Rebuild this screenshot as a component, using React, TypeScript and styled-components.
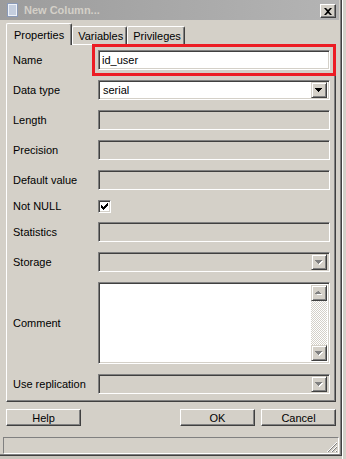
import styled, { createGlobalStyle, css } from 'styled-components'

const GlobalStyle = createGlobalStyle`
  html, body {
    margin: 0;
    padding: 0;
    background: #c9c5bd;
  }
  body {
    font-family: "Liberation Sans", Arial, sans-serif;
    font-size: 11px;
    color: #000;
  }
`

const sunken = css`
  border: 1px solid;
  border-color: #808080 #fff #fff #808080;
  box-shadow: inset 1px 1px #404040, inset -1px -1px #d4d0c8;
`

const raised = css`
  border: 1px solid;
  border-color: #d4d0c8 #404040 #404040 #d4d0c8;
  box-shadow: inset 1px 1px #fff, inset -1px -1px #808080;
`

const Page = styled.div`
  display: flex;
  width: 346px;
  height: 459px;
  overflow: hidden;
`

const Window = styled.div`
  width: 342px;
  height: 456px;
  display: flex;
  flex-direction: column;
  background: #d4d0c8;
  border-right: 1px solid #404040;
  border-bottom: 1px solid #404040;
  box-shadow: inset -1px -1px #808080;
  box-sizing: border-box;
`

const Backdrop = styled.div`
  flex: 1;
  background: #d4d0c8;
  border-left: 1px solid #fff;
`

const TitleBar = styled.div`
  height: 20px;
  margin-right: 2px;
  display: flex;
  align-items: center;
  gap: 6px;
  padding: 0 3px 0 7px;
  background: linear-gradient(90deg, #9c9c9c, #b4b4b4);
`

const Title = styled.span`
  flex: 1;
  font-weight: bold;
  font-size: 11px;
  color: #d4d0c8;
`

const CloseButton = styled.div`
  width: 16px;
  height: 14px;
  box-sizing: border-box;
  ${raised};
  border-color: #fff #404040 #404040 #fff;
  box-shadow: inset -1px -1px #808080;
  background: #d4d0c8;
  display: flex;
  align-items: center;
  justify-content: center;
  margin-top: 2px;
`

const Body = styled.div`
  flex: 1;
  display: flex;
  flex-direction: column;
  padding: 3px 2px 0 3px;
`

const TabStrip = styled.div`
  display: flex;
  align-items: flex-end;
  height: 21px;
  margin: 0 3px;
  position: relative;
  z-index: 1;
`

const Tab = styled.div<{ $active?: boolean }>`
  box-sizing: border-box;
  height: ${({ $active }) => ($active ? 22 : 18)}px;
  margin-bottom: ${({ $active }) => ($active ? -1 : 0)}px;
  padding: 0 ${({ $active }) => ($active ? 7 : 3)}px 0 ${({ $active }) => ($active ? 7 : 5)}px;
  display: flex;
  align-items: center;
  background: #d4d0c8;
  border: 1px solid #fff;
  border-bottom: none;
  border-right: 1px solid #404040;
  border-radius: 2px 2px 0 0;
  box-shadow: inset -1px 0 #808080;
`

const Panel = styled.div`
  margin: 0 3px;
  height: 358px;
  box-sizing: border-box;
  border: 1px solid;
  border-color: #fff #404040 #404040 #fff;
  box-shadow: inset -1px -1px #808080;
  padding: 5px 5px 6px 6px;
  display: grid;
  grid-template-columns: 85px 1fr;
  grid-template-rows: repeat(5, 20px) 12px 20px 20px 82px 20px;
  row-gap: 10px;
  align-items: center;
`

const Label = styled.div`
  white-space: nowrap;
`

const Field = styled.div<{ $disabled?: boolean; $height?: number }>`
  ${sunken};
  box-sizing: border-box;
  height: ${({ $height }) => $height ?? 20}px;
  background: ${({ $disabled }) => ($disabled ? '#d4d0c8' : '#fff')};
  display: flex;
  align-items: center;
  padding: 0 2px 0 3px;
`

const Highlight = styled.div`
  outline: 3px solid #ec1c24;
  outline-offset: 3px;
  height: 20px;
`

const FieldText = styled.span`
  flex: 1;
  padding-left: 1px;
`

const DropButton = styled.div`
  ${raised};
  box-sizing: border-box;
  width: 16px;
  height: 16px;
  background: #d4d0c8;
  display: flex;
  align-items: center;
  justify-content: center;
`

const CheckBox = styled.div`
  ${sunken};
  box-sizing: border-box;
  width: 13px;
  height: 13px;
  background: #fff;
  display: flex;
  align-items: center;
  justify-content: center;
`

const ScrollBar = styled.div`
  align-self: stretch;
  margin: 2px 0;
  width: 16px;
  display: flex;
  flex-direction: column;
  justify-content: space-between;
  background: repeating-conic-gradient(#fff 0% 25%, #d4d0c8 0% 50%) 0 0 / 2px 2px;
`

const ButtonRow = styled.div`
  display: flex;
  gap: 6px;
  margin: 7px 3px 0;
`

const PushButton = styled.div<{ $push?: boolean }>`
  box-sizing: border-box;
  width: 75px;
  height: 17px;
  display: flex;
  align-items: center;
  justify-content: center;
  border: 1px solid;
  border-color: #fff #404040 #404040 #fff;
  box-shadow: inset -1px -1px #808080;
  margin-left: ${({ $push }) => ($push ? 'auto' : '0')};
`

const StatusBar = styled.div`
  margin-top: 11px;
  height: 17px;
  box-sizing: border-box;
  border: 1px solid;
  border-color: #808080 #fff #fff #808080;
  display: flex;
  justify-content: flex-end;
  align-items: flex-end;
`

const Arrow = ({ up, disabled }: { up?: boolean; disabled?: boolean }) => (
  <svg width="8" height="5" viewBox="0 0 8 5">
    {disabled && (
      <path d={up ? 'M4 1h1v1h1v1h1v1H2v-1h1v-1h1z' : 'M2 1h6v1h-1v1h-1v1h-1v1h-1z'} fill="#fff" />
    )}
    <path
      d={up ? 'M3 0h1v1h1v1h1v1H0V2h1V1h1z' : 'M0 0h7v1H6v1H5v1H4v1H3V3H2V2H1V1H0z'}
      fill={disabled ? '#808080' : '#000'}
    />
  </svg>
)

const Combo = ({ value, disabled }: { value?: string; disabled?: boolean }) => (
  <Field $disabled={disabled}>
    <FieldText>{value}</FieldText>
    <DropButton>
      <Arrow disabled={disabled} />
    </DropButton>
  </Field>
)

export default function App() {
  return (
    <>
      <GlobalStyle />
      <Page>
        <Window>
          <TitleBar>
            <svg width="11" height="14" viewBox="0 0 11 14">
              <rect x="0.5" y="0.5" width="10" height="13" fill="#eef2f8" stroke="#8a9ab8" />
              <path d="M2 3h7M2 5h7M2 7h7M2 9h7M2 11h7" stroke="#9aaac4" />
            </svg>
            <Title>New Column...</Title>
            <CloseButton>
              <svg width="8" height="7" viewBox="0 0 8 7">
                <path d="M0 0h2l2 2 2-2h2L5 3.5 8 7H6L4 5 2 7H0l3-3.5z" fill="#000" />
              </svg>
            </CloseButton>
          </TitleBar>
          <Body>
            <TabStrip>
              <Tab $active>Properties</Tab>
              <Tab>Variables</Tab>
              <Tab>Privileges</Tab>
            </TabStrip>
            <Panel>
              <Label>Name</Label>
              <Highlight>
                <Field>
                  <span>id_user</span>
                </Field>
              </Highlight>

              <Label>Data type</Label>
              <Combo value="serial" />

              <Label>Length</Label>
              <Field $disabled />

              <Label>Precision</Label>
              <Field $disabled />

              <Label>Default value</Label>
              <Field $disabled />

              <Label>Not NULL</Label>
              <CheckBox>
                <svg width="7" height="7" viewBox="0 0 7 7">
                  <path d="M0 2h1v1h1v1h1V3h1V2h1V1h1V0h1v3H6v1H5v1H4v1H3v1H2V6H1V5H0z" fill="#000" />
                </svg>
              </CheckBox>

              <Label>Statistics</Label>
              <Field $disabled />

              <Label>Storage</Label>
              <Combo disabled />

              <Label>Comment</Label>
              <Field $height={82}>
                <FieldText />
                <ScrollBar>
                  <DropButton>
                    <Arrow up disabled />
                  </DropButton>
                  <DropButton>
                    <Arrow disabled />
                  </DropButton>
                </ScrollBar>
              </Field>

              <Label>Use replication</Label>
              <Combo disabled />
            </Panel>
            <ButtonRow>
              <PushButton>Help</PushButton>
              <PushButton $push>OK</PushButton>
              <PushButton>Cancel</PushButton>
            </ButtonRow>
            <StatusBar>
              <svg width="12" height="12" viewBox="0 0 12 12">
                <path d="M11 1L1 11M11 5L5 11M11 9L9 11" stroke="#fff" />
                <path d="M11 2L2 11M11 6L6 11M11 10L10 11" stroke="#808080" />
              </svg>
            </StatusBar>
          </Body>
        </Window>
        <Backdrop />
      </Page>
    </>
  )
}
